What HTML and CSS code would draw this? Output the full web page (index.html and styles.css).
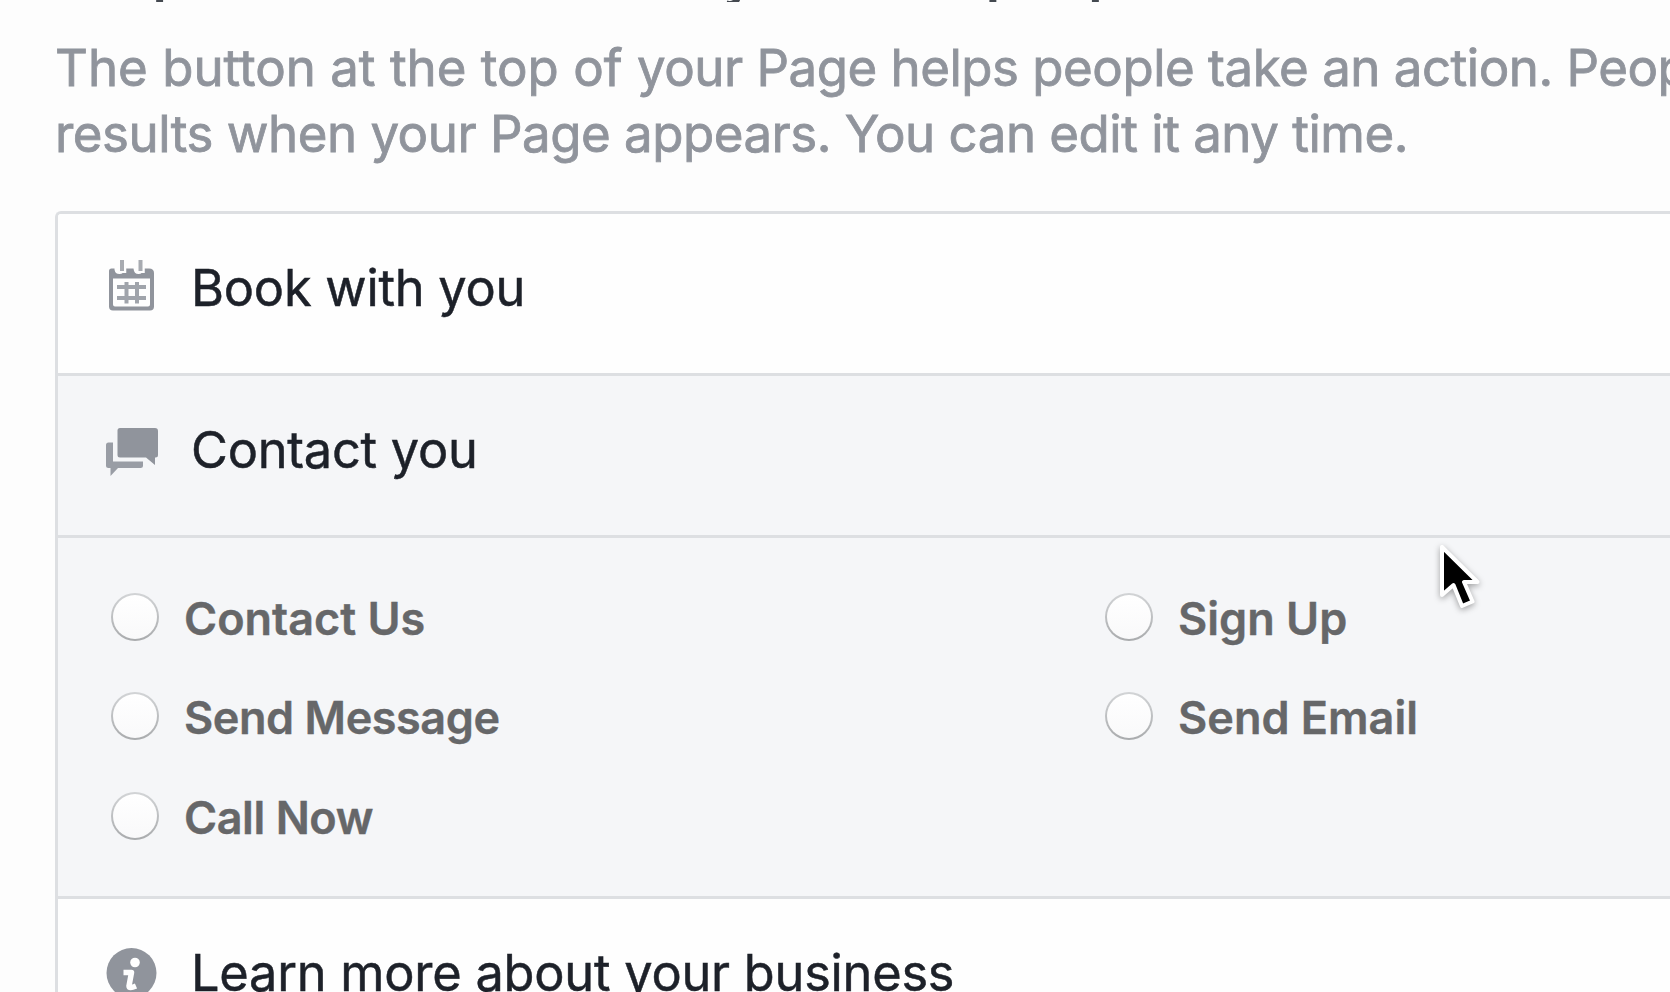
FILE: index.html
```html
<!DOCTYPE html>
<html lang="en">
<head>
<meta charset="utf-8">
<title>Add a button to your Page</title>
<link rel="stylesheet" href="styles.css">
</head>
<body>
<main class="page">
  <header class="heading"><h1 class="title">Step 1: Which button do you want people to see?</h1></header>
  <p class="intro"><span class="line">The button at the top of <span class="tight">your Page helps people take an action. Peop</span></span><span class="line tight">results when your Page appears. You can edit it any time.</span></p>
  <section class="choices">
    <div class="row">
      <svg class="icon" viewBox="0 0 54 54">
        <path fill="#90949c" fill-rule="evenodd" d="M4 11Q4 8.500 6.500 8.500H9.500V9.500Q10 14 14.500 14T19.500 8.500H28.500Q29 14 33.500 14T38 8.500H44Q49 8.500 49 13V46.500Q49 50.500 45 50.500H8Q4 50.500 4 46.500ZM8 18.500V44.500Q8 46.500 10 46.500H43Q45 46.500 45 44.500V18.500Z"/>
        <path fill="none" stroke="#fefefe" stroke-width="8.500" d="M17 4V13M35.500 4V13"/>
        <path fill="none" stroke="#a8abb1" stroke-width="4" d="M17 0V11M35.500 0V11"/>
        <path fill="none" stroke="#a0a4ab" stroke-width="4" d="M12 27H41M12 38H41M21.500 22V43.500M32 22V43.500"/>
      </svg>
      <span class="label">Book with you</span>
    </div>
    <div class="row shaded">
      <svg class="icon" viewBox="0 0 54 54">
        <path fill="#90949c" d="M15 6H50Q53 6 53 9V33Q53 35.500 50.500 35.500H50V43L41 35.500H15Q12.500 35.500 12.500 33V8.500Q12.500 6 15 6Z"/>
        <path fill="#999da5" d="M1 23Q1 20.500 3.500 20.500H8V39.500H38V43.500Q38 46 35.500 46H13L5.500 54V46H3.500Q1 46 1 43.500Z"/>
      </svg>
      <span class="label">Contact you</span>
    </div>
    <div class="options">
      <label class="option"><span class="radio"></span><span class="name">Contact Us</span></label>
      <label class="option"><span class="radio"></span><span class="name">Sign Up</span></label>
      <label class="option"><span class="radio"></span><span class="name snug">Send Message</span></label>
      <label class="option"><span class="radio"></span><span class="name">Send Email</span></label>
      <label class="option"><span class="radio"></span><span class="name snug">Call Now</span></label>
    </div>
    <div class="row">
      <svg class="icon" viewBox="0 0 54 54">
        <circle cx="26.500" cy="28" r="25" fill="#90949c"/>
        <circle cx="30" cy="17.500" r="4.800" fill="#fff"/>
        <path fill="none" stroke="#fff" stroke-width="5.500" stroke-linejoin="round" d="M18.500 27.500H26.500L24 41Q24 44 31 41"/>
      </svg>
      <span class="label">Learn more about your business</span>
    </div>
  </section>
</main>
<svg class="cursor" viewBox="0 0 46 70">
  <path fill="#000" stroke="#fff" stroke-width="4" stroke-linejoin="round" d="M4 4V52L15.500 42L24 63L34.500 58.500L26 39H39.500Z"/>
</svg>
</body>
</html>
```
FILE: styles.css
```css
* { box-sizing: border-box; }
html, body { height: 992px; overflow: hidden; }
body { margin: 0; background: #fdfdfd; font-family: Inter, "Liberation Sans", sans-serif; font-kerning: normal; }
.page { padding-left: 55px; height: 992px; overflow: hidden; }
.heading { height: 2px; overflow: hidden; display: flex; align-items: flex-end; padding-left: 8px; }
.title { margin: 0 0 -5px; flex: none; font-size: 54.500px; line-height: 64px; letter-spacing: 1px; font-weight: 600; color: #444950; white-space: nowrap; }
.intro { margin: 0; padding-top: 33px; height: 209px; font-size: 51px; line-height: 66px; color: #90949c; -webkit-text-stroke: .8px #90949c; }
.line { display: block; white-space: nowrap; }
.tight { letter-spacing: -.49px; }
.choices { border: 3px solid #dddfe2; border-right: 0; border-radius: 6px 0 0 0; height: 900px; background: #fefefe; overflow: hidden; }
.row { display: flex; gap: 32px; height: 159px; padding: 40px 0 0 47px; background: #fefefe; }
.shaded { border-top: 3px solid #dddfe2; height: 162px; background: #f5f6f8; }
.icon { width: 54px; height: 54px; flex: none; margin-top: 6px; }
.label { font-size: 50.500px; line-height: 68px; letter-spacing: -.23px; color: #1d2129; -webkit-text-stroke: .5px #1d2129; white-space: nowrap; }
.options { display: grid; grid-template-columns: 994px 600px; grid-auto-rows: 99.500px; padding: 30px 0 0 53px; height: 364px; border-top: 3px solid #dddfe2; border-bottom: 3px solid #dddfe2; background: #f5f6f8; }
.option { display: flex; align-items: center; gap: 25px; height: 97px; }
.radio { width: 48px; height: 48px; flex: none; border-radius: 50%; background: linear-gradient(#d2d4d6, #a9abad); padding: 2px; }
.radio::before { content: ""; display: block; width: 44px; height: 44px; border-radius: 50%; background: linear-gradient(#fff, #f9f9fa); }
.name { font-size: 45px; line-height: 60px; font-weight: 600; color: #666769; -webkit-text-stroke: .4px #666769; white-space: nowrap; padding-top: 4px; }
.snug { letter-spacing: -.45px; }
.cursor { position: absolute; left: 1438px; top: 543px; width: 46px; height: 70px; filter: drop-shadow(0 2px 3px rgba(0,0,0,.35)); }
```
